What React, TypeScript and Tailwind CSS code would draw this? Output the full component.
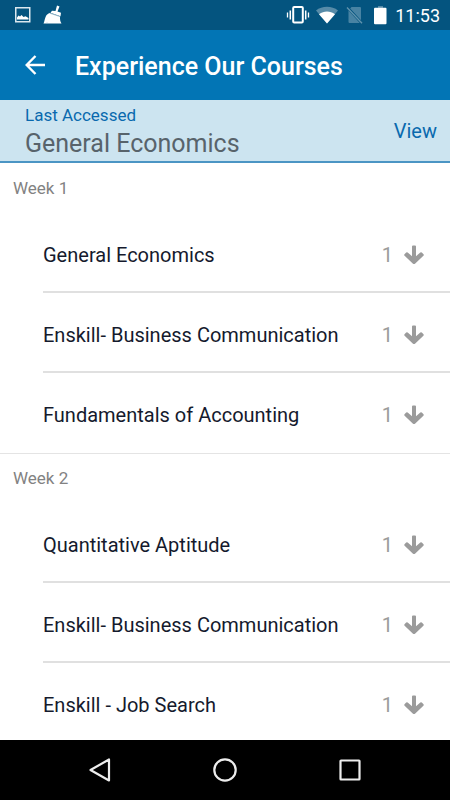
const sections = [
  {
    title: "Week 1",
    items: ["General Economics", "Enskill- Business Communication", "Fundamentals of Accounting"],
  },
  {
    title: "Week 2",
    items: ["Quantitative Aptitude", "Enskill- Business Communication", "Enskill - Job Search"],
  },
];

function StatusBar() {
  return (
    <div className="flex h-[30px] shrink-0 items-center justify-between bg-[#04547f] pr-2.5 pl-[15px] text-white">
      <div className="flex items-center gap-3">
        <svg width="16" height="16" viewBox="0 0 16 16" aria-hidden="true">
          <rect x="0.75" y="0.75" width="14" height="14" fill="none" stroke="#dbe8ef" strokeWidth="1.5" />
          <path d="M2 12.500V10.500L3.500 8.500 5 9.500 6.500 8l2 2 2-.8 3 1.800v1.500z" fill="#fff" />
        </svg>
        <svg width="20" height="20" viewBox="0 0 20 20" aria-hidden="true">
          <path d="M14 .5 16.500 1.500 14.500 6.500 18 7.800l-.5 3.400-10-3.400 1.500-2 3.500.2zM6.800 8l10.200 3.600c-.1 3 .2 5 1.500 7H.5c1-2 1.200-5 2.500-7.600.8-1.500 2-2.500 3.800-3z" fill="#fff" />
          <path d="m6.800 8.200 10.500 3.500M4 19v-1.500" stroke="#8db1c4" strokeWidth=".7" />
        </svg>
      </div>
      <div className="flex items-center">
        <svg width="24" height="20" viewBox="0 0 24 20" fill="none" stroke="#fff" aria-hidden="true">
          <rect x="7.2" y="2" width="9.600" height="15.500" rx="1" strokeWidth="2" />
          <path d="M4.300 5.500v9M19.700 5.500v9" strokeWidth="1.500" />
          <path d="M1.500 7.500v5M22.500 7.500v5" strokeWidth="1.300" />
        </svg>
        <svg className="ml-1.5" width="22" height="18" viewBox="0 0 22 18" aria-hidden="true">
          <path d="M0 4.500C6-.5 16-.5 22 4.500L11 17.500z" fill="#578ba8" />
          <path d="M3 8.300C8 4.500 14 4.500 19 8.300L11 17.500z" fill="#fff" />
        </svg>
        <svg className="ml-2" width="18" height="18" viewBox="0 0 18 18" aria-hidden="true">
          <path d="M5.500 1H14q1 0 1 1v12.200L4.200 2.500zM2.500 4.500 13.800 17H3.500q-1 0-1-1z" fill="#4883a3" />
          <path d="m1 1.500 15 15.800" stroke="#6093ad" strokeWidth="1.400" />
        </svg>
        <svg className="ml-2.5" width="13" height="19" viewBox="0 0 13 19" aria-hidden="true">
          <path d="M4 0h5v2H4z" fill="#578ba8" />
          <rect y="1.800" width="12.500" height="16.500" rx="1" fill="#fff" />
        </svg>
        <span className="ml-2 pt-0.5 text-[18px] leading-[28px]">11:53</span>
      </div>
    </div>
  );
}

function DownloadIcon() {
  return (
    <svg width="22" height="20" viewBox="0 0 22 20" fill="#9b9b9b" aria-hidden="true">
      <path d="M9 1.500q0-1 1-1h2q1 0 1 1v9.700l4.300-3.700q.8-.6 1.500.1l1.700 1.700q.7.8-.1 1.500l-8.400 7.900q-1 .8-2 0L1.600 10.800q-.8-.7-.1-1.500l1.700-1.700q.7-.7 1.500-.1L9 11.200z" />
    </svg>
  );
}

function Section({ title, items }: { title: string; items: string[] }) {
  return (
    <section className="border-t border-[#e4e4e4] first:border-transparent">
      <h2 className="flex h-[49px] items-center px-[13px] text-[17px] text-[#828282]">{title}</h2>
      <ul>
        {items.map((item) => (
          <li
            key={item}
            className="ml-[43px] flex h-20 items-center border-b-2 border-[#e0e0e0] pt-1.5 pr-[25px] last:border-transparent"
          >
            <span className="flex-1 text-[20px] text-[#151a2d]">{item}</span>
            <span className="text-[20px] text-[#9b9b9b]">1</span>
            <button type="button" className="ml-2.5" aria-label={`Download ${item}`}>
              <DownloadIcon />
            </button>
          </li>
        ))}
      </ul>
    </section>
  );
}

export default function App() {
  return (
    <div className="flex h-screen flex-col bg-white font-[Roboto,sans-serif]">
      <StatusBar />
      <header className="flex h-[70px] shrink-0 items-center bg-[#0275b5] pl-[25px] text-white">
        <button type="button" aria-label="Back">
          <svg width="20" height="20" viewBox="0 0 20 20" fill="none" stroke="#fff" strokeWidth="2.400" aria-hidden="true">
            <path d="M20 10H2M10.500 1 1.700 10l8.800 9" />
          </svg>
        </button>
        <h1 className="ml-[30px] pt-1 text-[25px] leading-[30px] font-medium">Experience Our Courses</h1>
      </header>
      <div className="flex h-[63px] shrink-0 items-center justify-between border-b-2 border-[#4b95c4] bg-[#cce4f0] pr-[13px] pl-[25px]">
        <div>
          <p className="text-[17px] leading-[28px] text-[#0969ae]">Last Accessed</p>
          <p className="pb-0.5 text-[25px] leading-[30px] text-[#58636b]">General Economics</p>
        </div>
        <a href="#view" className="text-[20px] text-[#0969ae]">View</a>
      </div>
      <main className="min-h-0 flex-1 overflow-y-auto [scrollbar-width:none]">
        {sections.map((section) => (
          <Section key={section.title} {...section} />
        ))}
      </main>
      <nav className="flex h-[60px] shrink-0 items-center justify-center gap-[101px] bg-black" aria-label="System">
        <button type="button" aria-label="Go back">
          <svg width="24" height="24" viewBox="0 0 24 24" fill="none" stroke="#ededed" strokeWidth="2.200" strokeLinejoin="round" aria-hidden="true">
            <path d="M21 1.500v21L2.500 12z" />
          </svg>
        </button>
        <button type="button" aria-label="Home">
          <svg width="24" height="24" viewBox="0 0 24 24" fill="none" stroke="#ededed" strokeWidth="2.200" aria-hidden="true">
            <circle cx="12" cy="12" r="10.700" />
          </svg>
        </button>
        <button type="button" aria-label="Recent apps">
          <svg width="24" height="24" viewBox="0 0 24 24" fill="none" stroke="#ededed" strokeWidth="2.200" strokeLinejoin="round" aria-hidden="true">
            <rect x="2.500" y="2.500" width="19" height="19" rx=".5" />
          </svg>
        </button>
      </nav>
    </div>
  );
}
